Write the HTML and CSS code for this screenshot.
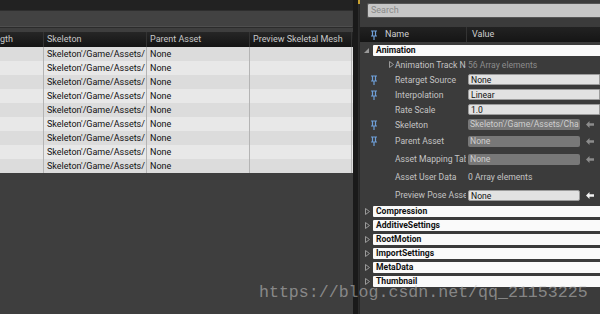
FILE: index.html
```html
<!DOCTYPE html>
<html lang="en">
<head>
    <meta charset="UTF-8">
    <title>Animation Sequence Details</title>
    <link rel="stylesheet" href="styles.css">
</head>
<body>
    <div class="editor">
        <!-- asset table -->
        <div class="left">
            <div class="top-strip"></div>
            <div class="filter-bar"></div>
            <div class="table">
                <div class="row head">
                    <div class="cell">gth</div>
                    <div class="cell">Skeleton</div>
                    <div class="cell">Parent Asset</div>
                    <div class="cell">Preview Skeletal Mesh</div>
                </div>
                <div class="row"><div class="cell"></div><div class="cell">Skeleton'/Game/Assets/</div><div class="cell">None</div><div class="cell"></div></div>
                <div class="row"><div class="cell"></div><div class="cell">Skeleton'/Game/Assets/</div><div class="cell">None</div><div class="cell"></div></div>
                <div class="row"><div class="cell"></div><div class="cell">Skeleton'/Game/Assets/</div><div class="cell">None</div><div class="cell"></div></div>
                <div class="row"><div class="cell"></div><div class="cell">Skeleton'/Game/Assets/</div><div class="cell">None</div><div class="cell"></div></div>
                <div class="row"><div class="cell"></div><div class="cell">Skeleton'/Game/Assets/</div><div class="cell">None</div><div class="cell"></div></div>
                <div class="row"><div class="cell"></div><div class="cell">Skeleton'/Game/Assets/</div><div class="cell">None</div><div class="cell"></div></div>
                <div class="row"><div class="cell"></div><div class="cell">Skeleton'/Game/Assets/</div><div class="cell">None</div><div class="cell"></div></div>
                <div class="row"><div class="cell"></div><div class="cell">Skeleton'/Game/Assets/</div><div class="cell">None</div><div class="cell"></div></div>
                <div class="row"><div class="cell"></div><div class="cell">Skeleton'/Game/Assets/</div><div class="cell">None</div><div class="cell"></div></div>
            </div>
        </div>

        <div class="splitter"></div>

        <!-- details panel -->
        <div class="right">
            <div class="search">Search</div>
            <div class="details-head">
                <div class="pin-col"><svg class="pin" viewBox="0 0 6 10"><path d="M0 1h6M1.5 1v5M4.5 1v5M0 6h6M3 6v4" stroke="#6f9fd8" stroke-width="1.2" fill="none"/></svg></div>
                <div class="name-col">Name</div>
                <div class="value-col">Value</div>
            </div>

            <div class="category open">
                <span class="arrow-down"></span>
                <div class="cat-bar">Animation</div>
            </div>

            <div class="prop">
                <div class="pin-col"></div>
                <div class="name"><svg class="sub-arrow" viewBox="0 0 5 7"><path d="M0.5 0.5L4.5 3.5L0.5 6.5z" fill="none" stroke="#9a9a9a"/></svg>Animation Track Na</div>
                <div class="value dim">56 Array elements</div>
            </div>
            <div class="prop">
                <div class="pin-col"><svg class="pin" viewBox="0 0 6 10"><path d="M0 1h6M1.5 1v5M4.5 1v5M0 6h6M3 6v4" stroke="#6f9fd8" stroke-width="1.2" fill="none"/></svg></div>
                <div class="name">Retarget Source</div>
                <div class="value"><div class="box light wide">None</div></div>
            </div>
            <div class="prop">
                <div class="pin-col"><svg class="pin" viewBox="0 0 6 10"><path d="M0 1h6M1.5 1v5M4.5 1v5M0 6h6M3 6v4" stroke="#6f9fd8" stroke-width="1.2" fill="none"/></svg></div>
                <div class="name">Interpolation</div>
                <div class="value"><div class="box light wide">Linear</div></div>
            </div>
            <div class="prop">
                <div class="pin-col"></div>
                <div class="name">Rate Scale</div>
                <div class="value"><div class="box light wide">1.0</div></div>
            </div>
            <div class="prop">
                <div class="pin-col"><svg class="pin" viewBox="0 0 6 10"><path d="M0 1h6M1.5 1v5M4.5 1v5M0 6h6M3 6v4" stroke="#6f9fd8" stroke-width="1.2" fill="none"/></svg></div>
                <div class="name">Skeleton</div>
                <div class="value"><div class="box grey">Skeleton'/Game/Assets/Cha</div><svg class="use-arrow" viewBox="0 0 8 7"><path d="M0 3.5L3.5 0v2.3H8v2.4H3.5V7z" fill="#8c8c8c"/></svg></div>
            </div>
            <div class="prop tall">
                <div class="pin-col"><svg class="pin" viewBox="0 0 6 10"><path d="M0 1h6M1.5 1v5M4.5 1v5M0 6h6M3 6v4" stroke="#6f9fd8" stroke-width="1.2" fill="none"/></svg></div>
                <div class="name">Parent Asset</div>
                <div class="value"><div class="box grey">None</div><svg class="use-arrow" viewBox="0 0 8 7"><path d="M0 3.5L3.5 0v2.3H8v2.4H3.5V7z" fill="#8c8c8c"/></svg></div>
            </div>
            <div class="prop tall">
                <div class="pin-col"></div>
                <div class="name">Asset Mapping Tabl</div>
                <div class="value"><div class="box grey">None</div><svg class="use-arrow" viewBox="0 0 8 7"><path d="M0 3.5L3.5 0v2.3H8v2.4H3.5V7z" fill="#8c8c8c"/></svg></div>
            </div>
            <div class="prop tall">
                <div class="pin-col"></div>
                <div class="name">Asset User Data</div>
                <div class="value">0 Array elements</div>
            </div>
            <div class="prop tall">
                <div class="pin-col"></div>
                <div class="name">Preview Pose Asset</div>
                <div class="value"><div class="box light">None</div><svg class="use-arrow" viewBox="0 0 8 7"><path d="M0 3.5L3.5 0v2.3H8v2.4H3.5V7z" fill="#f2f2f2"/></svg></div>
            </div>

            <div class="category"><svg class="arrow-right" viewBox="0 0 5 7"><path d="M0.5 0.5L4.5 3.5L0.5 6.5z" fill="none" stroke="#9a9a9a"/></svg><div class="cat-bar">Compression</div></div>
            <div class="category"><svg class="arrow-right" viewBox="0 0 5 7"><path d="M0.5 0.5L4.5 3.5L0.5 6.5z" fill="none" stroke="#9a9a9a"/></svg><div class="cat-bar">AdditiveSettings</div></div>
            <div class="category"><svg class="arrow-right" viewBox="0 0 5 7"><path d="M0.5 0.5L4.5 3.5L0.5 6.5z" fill="none" stroke="#9a9a9a"/></svg><div class="cat-bar">RootMotion</div></div>
            <div class="category"><svg class="arrow-right" viewBox="0 0 5 7"><path d="M0.5 0.5L4.5 3.5L0.5 6.5z" fill="none" stroke="#9a9a9a"/></svg><div class="cat-bar">ImportSettings</div></div>
            <div class="category"><svg class="arrow-right" viewBox="0 0 5 7"><path d="M0.5 0.5L4.5 3.5L0.5 6.5z" fill="none" stroke="#9a9a9a"/></svg><div class="cat-bar">MetaData</div></div>
            <div class="category"><svg class="arrow-right" viewBox="0 0 5 7"><path d="M0.5 0.5L4.5 3.5L0.5 6.5z" fill="none" stroke="#9a9a9a"/></svg><div class="cat-bar">Thumbnail</div></div>
        </div>
    </div>

    <div class="watermark">https://blog.csdn.net/qq_21153225</div>
</body>
</html>
```

FILE: styles.css
```css
body {
    margin: 0;
    width: 600px;
    height: 314px;
    overflow: hidden;
    position: relative;
    font-family: Roboto, "Liberation Sans", sans-serif;
    font-size: 9px;
    background-color: #1d1d1d;
}
.editor {
    display: flex;
    height: 314px;
}

/* left: asset table */
.left {
    width: 353px;
    flex-shrink: 0;
    display: flex;
    flex-direction: column;
    background-color: #3e3e3e;
}
.top-strip {
    height: 10px;
    background-color: #222222;
    border-bottom: 1px solid #2e2e2e;
}
.filter-bar {
    height: 15px;
    background-color: #424242;
    border-bottom: 1px solid #4e4e4e;
    margin-right: 1px;
}
.table {
    padding-top: 4px;
    background-color: #3e3e3e;
    border-top: 1px solid #2b2b2b;
}
.row {
    display: grid;
    grid-template-columns: 44px 103px 103px 102px;
    height: 14px;
    line-height: 14px;
    color: #111;
    background-color: #dcdcdc;
}
.row:nth-child(odd) {
    background-color: #e8e8e8;
}
.row .cell {
    border-right: 1px solid #b4b4b4;
    padding-left: 3px;
    white-space: nowrap;
    overflow: hidden;
}
.row .cell:first-child {
    padding-left: 0;
}
.row.head {
    height: 15px;
    line-height: 15px;
    color: #c8c8c8;
    background: linear-gradient(#262626, #141414);
}
.row.head .cell {
    border-right: 1px solid #333;
}

.splitter {
    width: 5px;
    flex-shrink: 0;
    background-color: #1a1a1a;
    border-right: 1px solid #2c2c2c;
    position: relative;
}
.splitter::before {
    content: "";
    position: absolute;
    right: -2px;
    top: 0;
    width: 2px;
    height: 4px;
    background-color: #c8a030;
}

/* right: details panel */
.right {
    width: 240px;
    flex-shrink: 0;
    background-color: #3b3b3b;
    padding-top: 3px;
    color: #c4c4c4;
    border-left: 1px solid #262626;
    font-size: 8.6px;
}
.search {
    margin-left: 7px;
    height: 13px;
    line-height: 13px;
    padding-left: 3px;
    background-color: #c6c6c6;
    border: 1px solid #555;
    border-right: none;
    border-radius: 2px 0 0 2px;
    color: #8a8a8a;
    font-size: 9px;
}
.details-head {
    margin-top: 9px;
    display: flex;
    height: 15px;
    line-height: 15px;
    background: linear-gradient(#222, #151515);
    color: #cfcfcf;
    font-size: 9px;
}
.pin-col {
    width: 25px;
    flex-shrink: 0;
    display: flex;
    align-items: center;
    padding-left: 11px;
    box-sizing: border-box;
}
.pin {
    width: 6px;
    height: 10px;
}
.details-head .name-col {
    width: 81px;
    border-right: 1px solid #333;
}
.details-head .value-col {
    padding-left: 5px;
}

.category {
    display: flex;
    align-items: center;
    height: 14px;
}
.category.open {
    margin-top: 1px;
}
.arrow-down {
    width: 0;
    height: 0;
    margin: 0 4px 0 4px;
    border-left: 5px solid transparent;
    border-bottom: 5px solid #9a9a9a;
}
.arrow-right {
    width: 5px;
    height: 7px;
    margin: 0 3px 0 5px;
    flex-shrink: 0;
}
.cat-bar {
    flex: 1;
    height: 11px;
    line-height: 11px;
    background-color: #fafafa;
    color: #111;
    font-weight: bold;
    padding-left: 3px;
    border-radius: 1px 0 0 1px;
}

.prop {
    display: flex;
    align-items: center;
    height: 15px;
}
.prop.tall {
    height: 18px;
}
.prop .name {
    width: 81px;
    flex-shrink: 0;
    padding-left: 4px;
    box-sizing: border-box;
    white-space: nowrap;
    overflow: hidden;
    display: flex;
    align-items: center;
}
.prop .name::before {
    content: "";
    width: 6px;
    flex-shrink: 0;
}
.sub-arrow {
    width: 5px;
    height: 7px;
    margin-left: -6px;
    margin-right: 1px;
    flex-shrink: 0;
}
.prop .value {
    flex: 1;
    display: flex;
    align-items: center;
    padding-left: 2px;
    white-space: nowrap;
}
.prop .value.dim {
    color: #8c8c8c;
}
.box {
    width: 112px;
    height: 11px;
    line-height: 11px;
    padding-left: 2px;
    box-sizing: border-box;
    overflow: hidden;
    white-space: nowrap;
    border-radius: 2px;
}
.box.wide {
    flex: 1;
    border-radius: 2px 0 0 2px;
}
.box.light {
    background-color: #e2e2e2;
    border: 1px solid #9c9c9c;
    color: #111;
}
.box.grey {
    background-color: #787878;
    color: #cfcfcf;
}
.use-arrow {
    margin-left: 6px;
    width: 8px;
    height: 7px;
}

.watermark {
    position: absolute;
    left: 259px;
    top: 283px;
    font-family: "Liberation Mono", monospace;
    font-size: 16.6px;
    color: rgba(200, 200, 200, 0.55);
}
```
